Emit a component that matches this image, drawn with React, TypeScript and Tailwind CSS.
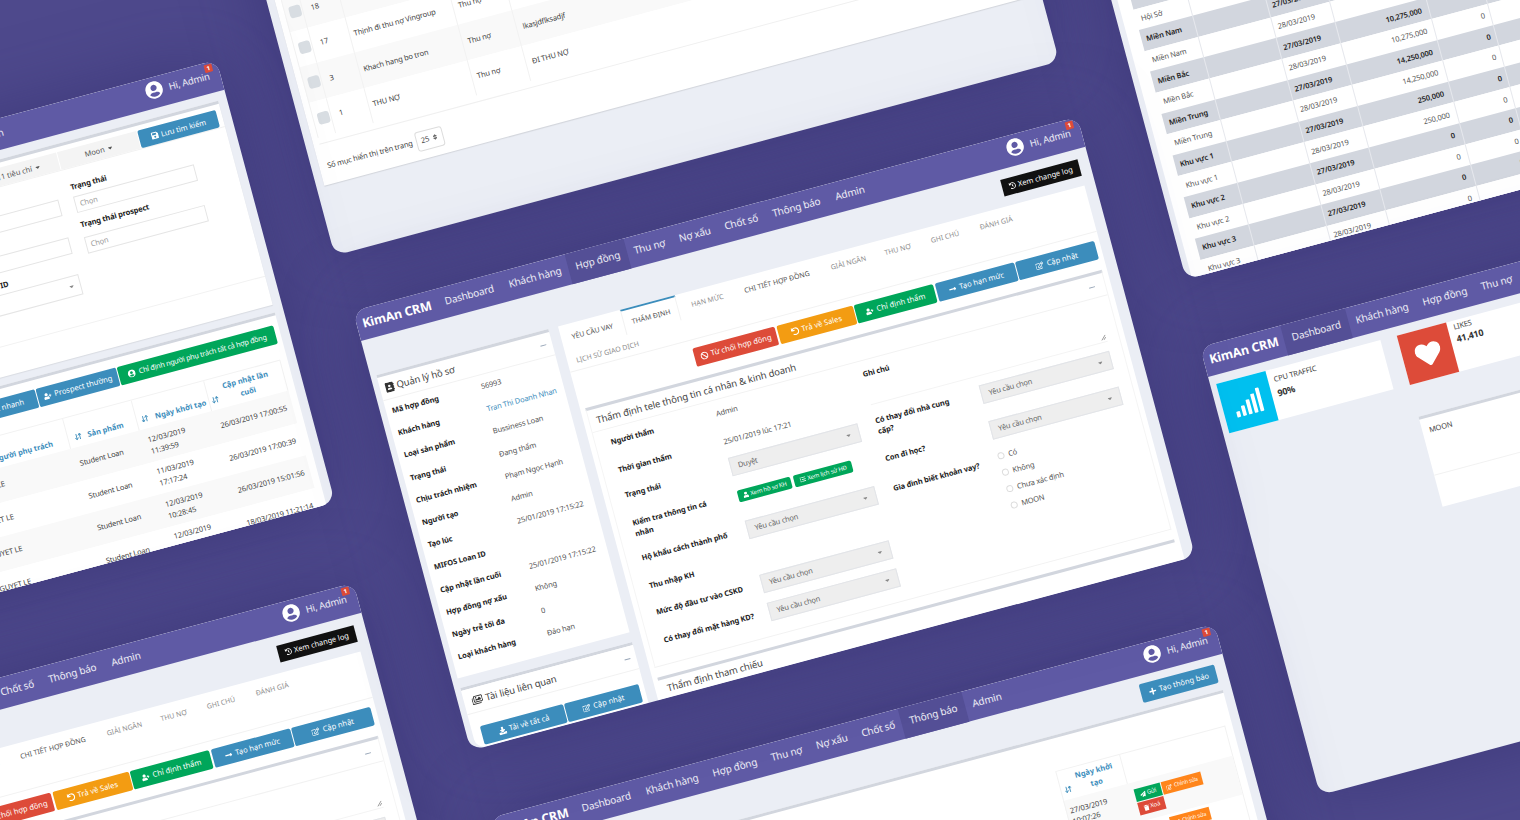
import type { ReactNode } from "react";
import {
  FaAddressBook,
  FaBan,
  FaCaretDown,
  FaDownload,
  FaHeart,
  FaHistory,
  FaList,
  FaLongArrowAltRight,
  FaPaperPlane,
  FaPlus,
  FaRegEdit,
  FaRegImages,
  FaSave,
  FaSignal,
  FaSort,
  FaTrash,
  FaUndo,
  FaUser,
  FaUserCircle,
  FaUserPlus,
} from "react-icons/fa";
import { ArrowDownUp } from "lucide-react";

const NAV = [
  { label: "Dashboard", w: "w-[67px]" },
  { label: "Khách hàng", w: "w-[69px]" },
  { label: "Hợp đồng", w: "w-[61px]" },
  { label: "Thu nợ", w: "w-[46px]" },
  { label: "Nợ xấu", w: "w-[48px]" },
  { label: "Chốt số", w: "w-[48px]" },
  { label: "Thông báo", w: "w-[66px]" },
  { label: "Admin", w: "w-[45px]" },
];

function Nav({ active }: { active?: string }) {
  return (
    <div className="relative flex h-[31px] shrink-0 bg-[#5f5aa5] tracking-normal text-white">
      <div className="flex w-[83px] items-center pb-[3px] pl-[6px] text-[12.5px] font-bold tracking-[-0.01em] whitespace-nowrap">
        KimAn CRM
      </div>
      {NAV.map((n) => (
        <div
          key={n.label}
          className={`flex items-center justify-center pb-[3px] text-[10px] tracking-[-0.015em] whitespace-nowrap text-white/90 ${n.w} ${
            active === n.label ? "bg-[#544f96]" : ""
          }`}
        >
          {n.label}
        </div>
      ))}
      <div className="ml-auto flex items-center gap-[6px] pr-[11px] pb-[5px] text-[9.5px] tracking-[-0.02em] whitespace-nowrap text-white/90">
        <FaUserCircle className="size-[18px] text-white" />
        Hi, Admin
      </div>
      <span className="absolute top-[2px] right-[6px] flex size-[8px] items-center justify-center rounded-[1px] bg-[#dd4b39] text-[6px] font-bold text-white">
        1
      </span>
    </div>
  );
}

function Win({ className, h = "h-[455px]", children }: { className: string; h?: string; children: ReactNode }) {
  return (
    <div
      className={`absolute flex w-[750px] origin-top-left rotate-[-15deg] flex-col overflow-hidden rounded-[13px] bg-[#ebeef5] text-[7.5px] leading-[11px] tracking-[-0.02em] text-[#555] shadow-[0_0_70px_rgba(52,47,112,0.6)] ${h} ${className}`}
    >
      {children}
    </div>
  );
}

function Btn({ color, w, icon, children }: { color: string; w: string; icon?: ReactNode; children: ReactNode }) {
  return (
    <div
      className={`flex h-[19px] items-center justify-center gap-[3px] rounded-[2px] text-[7.6px] tracking-normal whitespace-nowrap text-white ${color} ${w}`}
    >
      {icon}
      {children}
    </div>
  );
}

function Select({ w, label }: { w: string; label: string }) {
  return (
    <div className={`flex h-[19px] items-center justify-between border border-[#e2e4e8] bg-[#eeeeee] px-[7px] text-[#666] ${w}`}>
      {label}
      <FaCaretDown className="size-[7px] text-[#888]" />
    </div>
  );
}

function Minus() {
  return <span className="h-[1px] w-[6px] bg-[#98a6b8]" />;
}

function Bold({ children }: { children: ReactNode }) {
  return <div className="text-[7.5px] leading-[11px] font-bold tracking-[-0.015em] whitespace-nowrap text-[#222]">{children}</div>;
}

const PROFILE = [
  ["Mã hợp đồng", "56993"],
  ["Khách hàng", "Tran Thi Doanh Nhan"],
  ["Loại sản phẩm", "Bussiness Loan"],
  ["Trạng thái", "Đang thẩm"],
  ["Chịu trách nhiệm", "Phạm Ngọc Hạnh"],
  ["Người tạo", "Admin"],
  ["Tạo lúc", "25/01/2019 17:15:22"],
  ["MIFOS Loan ID", ""],
  ["Cập nhật lần cuối", "25/01/2019 17:15:22"],
  ["Hợp đồng nợ xấu", "Không"],
  ["Ngày trễ tối đa", "0"],
  ["Loại khách hàng", "Đáo hạn"],
];

const TABS = [
  { label: "YÊU CẦU VAY", w: "w-[64px]", tone: "text-[#555]" },
  { label: "THẨM ĐỊNH", w: "w-[57px] border-t-2 border-x border-x-[#f2f2f2] border-t-[#3c8dbc]", tone: "text-[#555]" },
  { label: "HẠN MỨC", w: "w-[60px]", tone: "text-[#8f8f8f]" },
  { label: "CHI TIẾT HỢP ĐỒNG", w: "w-[84px]", tone: "text-[#555]" },
  { label: "GIẢI NGÂN", w: "w-[64px]", tone: "text-[#8f8f8f]" },
  { label: "THU NỢ", w: "w-[38px]", tone: "text-[#8f8f8f]" },
  { label: "GHI CHÚ", w: "w-[60px]", tone: "text-[#8f8f8f]" },
  { label: "ĐÁNH GIÁ", w: "w-[46px]", tone: "text-[#8f8f8f]" },
];

const ic = "size-[8px] shrink-0";
const boxTitle = "text-[9.5px] tracking-[-0.01em] whitespace-nowrap text-[#444]";

function ContractWin({ className }: { className: string }) {
  return (
    <Win className={className}>
      <Nav active="Hợp đồng" />
      <div className="flex flex-1 flex-col pr-[11px] pl-[6px]">
        <div className="mt-[10px] flex justify-end">
          <div className="flex h-[17px] w-[80px] items-center justify-center gap-[2px] bg-[#111] text-[7.5px] tracking-normal whitespace-nowrap text-white">
            <FaHistory className="size-[7px]" />
            Xem change log
          </div>
        </div>
        <div className="mt-[10px] flex flex-1 gap-[10px]">
          {/* cột trái */}
          <div className="flex w-[178px] shrink-0 flex-col gap-[10px]">
            <div className="h-[314px] border-t-[3px] border-[#d2d6de] bg-white">
              <div className={`flex h-[24px] items-center justify-between border-b border-[#f2f2f2] pr-[6px] pl-[5px] ${boxTitle}`}>
                <span className="flex items-center gap-[2px]">
                  <FaAddressBook className="size-[10px] text-[#333]" />
                  Quản lý hồ sơ
                </span>
                <Minus />
              </div>
              {PROFILE.map(([k, v]) => (
                <div key={k} className="flex h-[23.2px] items-center pl-[6px]">
                  <div className="w-[92px]">
                    <Bold>{k}</Bold>
                  </div>
                  <span className={`whitespace-nowrap ${k === "Khách hàng" ? "text-[#3c8dbc]" : ""}`}>{v}</span>
                </div>
              ))}
            </div>
            <div className="flex-1 rounded-bl-[10px] border-t-[3px] border-[#d2d6de] bg-white">
              <div className={`flex h-[25px] items-center justify-between border-b border-[#f2f2f2] pr-[6px] pl-[8px] ${boxTitle}`}>
                <span className="flex items-center gap-[3px]">
                  <FaRegImages className="size-[11px] text-[#333]" />
                  Tài liệu liên quan
                </span>
                <Minus />
              </div>
              <div className="mt-[14px] ml-[9px] flex gap-px">
                <Btn color="bg-[#3c8dbc]" w="w-[86px]" icon={<FaDownload className={ic} />}>
                  Tải về tất cả
                </Btn>
                <Btn color="bg-[#3c8dbc]" w="w-[77px]" icon={<FaRegEdit className={ic} />}>
                  Cập nhật
                </Btn>
              </div>
            </div>
          </div>

          {/* cột phải */}
          <div className="flex-1 bg-white px-[5px]">
            <div className="-mx-[5px] h-[48px] border-b border-[#f2f2f2] tracking-normal">
              <div className="flex h-[26px]">
                {TABS.map((t) => (
                  <div key={t.label} className={`flex items-center justify-center text-[7px] whitespace-nowrap ${t.w} ${t.tone}`}>
                    {t.label}
                  </div>
                ))}
              </div>
              <div className="flex h-[22px] items-center pl-[9px] text-[7px] text-[#8f8f8f]">LỊCH SỬ GIAO DỊCH</div>
            </div>
            <div className="mt-[8px] flex justify-end gap-[1.5px]">
              <Btn color="bg-[#dd4b39]" w="w-[85px]" icon={<FaBan className={ic} />}>
                Từ chối hợp đồng
              </Btn>
              <Btn color="bg-[#f39c12]" w="w-[79px]" icon={<FaUndo className={ic} />}>
                Trả về Sales
              </Btn>
              <Btn color="bg-[#00a65a]" w="w-[82px]" icon={<FaUserPlus className={ic} />}>
                Chỉ định thẩm
              </Btn>
              <Btn color="bg-[#3c8dbc]" w="w-[82px]" icon={<FaLongArrowAltRight className={ic} />}>
                Tạo hạn mức
              </Btn>
              <Btn color="bg-[#3c8dbc]" w="w-[82px]" icon={<FaRegEdit className={ic} />}>
                Cập nhật
              </Btn>
            </div>
            <div className="mt-[11px] h-[269px] border-t-[3px] border-x border-b border-x-[#f5f5f5] border-b-[#f2f2f2] border-t-[#d2d6de]">
              <div className={`flex h-[23px] items-center justify-between border-b border-[#f2f2f2] pr-[10px] pl-[7px] ${boxTitle}`}>
                Thẩm định tele thông tin cá nhân &amp; kinh doanh
                <Minus />
              </div>
              <div className="flex pl-[15px]">
                <div className="w-[261px]">
                  <div className="flex h-[27px] items-center">
                    <div className="w-[109px]"><Bold>Người thẩm</Bold></div>
                    Admin
                  </div>
                  <div className="flex h-[31px] items-center">
                    <div className="w-[109px]"><Bold>Thời gian thẩm</Bold></div>
                    25/01/2019 lúc 17:21
                  </div>
                  <div className="flex h-[21px] items-center">
                    <div className="w-[109px]"><Bold>Trạng thái</Bold></div>
                    <Select w="w-[134px]" label="Duyệt" />
                  </div>
                  <div className="flex h-[39px]">
                    <div className="w-[109px] pt-[13px]">
                      <Bold>
                        Kiểm tra thông tin cá
                        <br />
                        nhân
                      </Bold>
                    </div>
                    <div className="flex gap-[3px] pt-[14px]">
                      <div className="flex h-[12px] w-[55px] items-center justify-center gap-[2px] rounded-[2px] bg-[#00a65a] text-[6px] whitespace-nowrap text-white">
                        <FaUser className="size-[6px]" />
                        Xem hồ sơ KH
                      </div>
                      <div className="flex h-[12px] w-[60px] items-center justify-center gap-[2px] rounded-[2px] bg-[#00a65a] text-[6px] whitespace-nowrap text-white">
                        <FaList className="size-[6px]" />
                        Xem lịch sử HĐ
                      </div>
                    </div>
                  </div>
                  <div className="flex h-[30px] items-center">
                    <div className="w-[109px]"><Bold>Hộ khẩu cách thành phố</Bold></div>
                    <Select w="w-[134px]" label="Yêu cầu chọn" />
                  </div>
                  <div className="flex h-[28px] items-center">
                    <div className="w-[109px]"><Bold>Thu nhập KH</Bold></div>
                  </div>
                  <div className="flex h-[27px] items-center">
                    <div className="w-[109px]"><Bold>Mức độ đầu tư vào CSKD</Bold></div>
                    <Select w="w-[134px]" label="Yêu cầu chọn" />
                  </div>
                  <div className="flex h-[30px] items-center">
                    <div className="w-[109px]"><Bold>Có thay đổi mặt hàng KD?</Bold></div>
                    <Select w="w-[134px]" label="Yêu cầu chọn" />
                  </div>
                </div>
                <div className="flex-1 pr-[12px]">
                  <div className="flex h-[45px] border-b border-[#f4f4f4]">
                    <div className="w-[109px] pt-[8px]"><Bold>Ghi chú</Bold></div>
                    <div className="flex flex-1 items-end justify-end pb-[1px]">
                      <svg viewBox="0 0 8 8" className="size-[6px] text-[#888]">
                        <path d="M1 7 7 1M4 7l3-3" stroke="currentColor" fill="none" />
                      </svg>
                    </div>
                  </div>
                  <div className="flex h-[46px]">
                    <div className="w-[109px] pt-[11px]">
                      <Bold>
                        Có thay đổi nhà cung
                        <br />
                        cấp?
                      </Bold>
                    </div>
                    <div className="pt-[9px]"><Select w="w-[135px]" label="Yêu cầu chọn" /></div>
                  </div>
                  <div className="flex h-[28px]">
                    <div className="w-[109px] pt-[4px]"><Bold>Con đi học?</Bold></div>
                    <Select w="w-[135px]" label="Yêu cầu chọn" />
                  </div>
                  <div className="flex">
                    <div className="w-[109px] pt-[7px]"><Bold>Gia đình biết khoản vay?</Bold></div>
                    <div>
                      {["Có", "Không", "Chưa xác định", "MOON"].map((r) => (
                        <div key={r} className="flex h-[17px] items-center gap-[4px]">
                          <span className="size-[7px] rounded-full border border-[#ddd] bg-white" />
                          {r}
                        </div>
                      ))}
                    </div>
                  </div>
                </div>
              </div>
            </div>
            <div className={`mt-[10px] border-t-[3px] border-[#d2d6de] pt-[4px] pl-[7px] ${boxTitle}`}>Thẩm định tham chiếu</div>
          </div>
        </div>
      </div>
    </Win>
  );
}

function SortHead({ children, className }: { children: ReactNode; className: string }) {
  return (
    <div className={`flex h-full items-end gap-[6px] border-r border-[#f2f2f2] pb-[4px] text-[7.5px] leading-[12px] font-bold tracking-normal text-[#3c8dbc] ${className}`}>
      <ArrowDownUp className="mb-[2px] size-[8px] shrink-0" strokeWidth={2.5} />
      {children}
    </div>
  );
}

const LEADS = [
  ["12/03/2019", "11:39:59", "26/03/2019 17:00:55"],
  ["11/03/2019", "17:17:24", "26/03/2019 17:00:39"],
  ["12/03/2019", "10:28:45", "26/03/2019 15:01:56"],
  ["12/03/2019", "11:39:59", "18/03/2019 11:21:14"],
];

function FilterWin({ className }: { className: string }) {
  const label = "h-[12px] text-[7.6px] leading-[12px] font-bold whitespace-nowrap text-[#222]";
  const input = "flex h-[17px] w-[125px] items-center border border-[#e5e5e5] px-[4px] text-[#999]";
  const tool = "flex h-[18px] items-center justify-center gap-[2px] tracking-normal";
  return (
    <Win className={className} h="h-[458px]">
      <Nav />
      <div className="flex flex-1 flex-col pr-[9px] pl-[6px]">
        <div className="mt-[9px] flex h-[211px] flex-col border-t-[3px] border-[#d2d6de] bg-white shadow-[0_1px_1px_rgba(0,0,0,0.08)]">
          <div className="flex h-[24px] items-end justify-end gap-px border-b border-[#f2f2f2] pr-[5px]">
            <div className={`${tool} w-[82px] bg-[#f4f4f4] text-[#555]`}>
              11 tiêu chí <FaCaretDown className="size-[7px]" />
            </div>
            <div className={`${tool} w-[82px] bg-[#f4f4f4] text-[#555]`}>
              Moon <FaCaretDown className="size-[7px]" />
            </div>
            <div className={`${tool} w-[81px] rounded-[2px] bg-[#3c8dbc] whitespace-nowrap text-white`}>
              <FaSave className="size-[8px]" /> Lưu tìm kiếm
            </div>
          </div>
          <div className="flex flex-1 justify-end gap-[15px] pr-[40px]">
            <div className="pt-[11px]">
              <div className={label} />
              <div className={`${input} mt-[4px]`} />
              <div className={`${label} mt-[5px]`} />
              <div className={`${input} mt-[5px]`} />
              <div className={`${label} mt-[6px] w-[55px] text-right`}>MIFOS ID</div>
              <div className="mt-[3px] flex h-[21px] w-[125px] items-center justify-end border border-[#e5e5e5] px-[5px]">
                <FaCaretDown className="size-[7px] text-[#888]" />
              </div>
            </div>
            <div className="pt-[12px]">
              <div className={label}>Trạng thái</div>
              <div className={`${input} mt-[4px]`}>Chọn</div>
              <div className={`${label} mt-[6px]`}>Trạng thái prospect</div>
              <div className={`${input} mt-[7px]`}>Chọn</div>
            </div>
          </div>
          <div className="h-[30px] border-t border-[#f2f2f2]" />
        </div>
        <div className="mt-[8px] flex-1 border-t-[3px] border-[#d2d6de] bg-white">
          <div className="mt-[9px] flex justify-end gap-px pr-[5px]">
            <Btn color="bg-[#3c8dbc]" w="w-[83px]">Prospect nhanh</Btn>
            <Btn color="bg-[#3c8dbc]" w="w-[83px]" icon={<FaUserPlus className={ic} />}>Prospect thường</Btn>
            <Btn color="bg-[#00a65a]" w="w-[162px]" icon={<FaUserCircle className={ic} />}>
              <span className="text-[7.2px] tracking-[-0.025em]">Chỉ định người phụ trách tất cả hợp đồng</span>
            </Btn>
          </div>
          <div className="mt-[16px] mr-[7px] ml-auto w-[342px] border-t border-l border-[#f2f2f2]">
            <div className="flex h-[31px]">
              <SortHead className="w-[116px] justify-end pr-[15px]">Người phụ trách</SortHead>
              <SortHead className="w-[72px] pl-[6px]">Sản phẩm</SortHead>
              <SortHead className="w-[75px] pl-[4px]">Ngày khởi tạo</SortHead>
              <SortHead className="w-[79px] pl-[2px] text-center">
                Cập nhật lần
                <br />
                cuối
              </SortHead>
            </div>
            {LEADS.map((r, i) => (
              <div key={i} className={`flex h-[33.5px] items-center text-[#444] ${i % 2 === 0 ? "bg-[#f9f9f9]" : "bg-white"}`}>
                <div className="w-[116px] pl-[5px]">NGUYET LE</div>
                <div className="w-[72px] pl-[5px]">Student Loan</div>
                <div className="w-[75px] pl-[5px] leading-[12px]">
                  {r[0]}
                  <br />
                  {r[1]}
                </div>
                <div className="w-[79px] pl-[4px] whitespace-nowrap">{r[2]}</div>
              </div>
            ))}
          </div>
        </div>
      </div>
    </Win>
  );
}

const DEBTS = [
  ["18", "", "Thu nợ", ""],
  ["17", "Thịnh đi thu nợ Vingroup", "Thu nợ", ""],
  ["3", "Khach hang bo tron", "Thu nợ", "lkasjdflksadjf"],
  ["1", "THU NỢ", "Thu nợ", "ĐI THU NỢ"],
];

function DebtListWin({ className }: { className: string }) {
  return (
    <Win className={className}>
      <Nav active="Thu nợ" />
      <div className="flex flex-1 flex-col justify-end pr-[8px] pb-[70px] pl-[8px]">
        <div className="rounded-t-[2px] bg-white pt-[8px] shadow-[0_1px_1px_rgba(0,0,0,0.1)]">
          <div className="mx-[6px] border-b border-[#f0f0f0] pb-[6px]">
            {DEBTS.map((r, i) => (
              <div key={r[0]} className={`flex h-[36.5px] items-center text-[#444] ${i % 2 === 0 ? "bg-[#f9f9f9]" : "bg-white"}`}>
                <div className="flex h-full w-[19px] items-center justify-center border-x border-[#f2f2f2] pl-[2px]">
                  <span className="size-[12px] rounded-[3px] bg-[#d8dde2]" />
                </div>
                <div className="flex h-full w-[39px] items-center border-r border-[#f2f2f2] pl-[8px]">{r[0]}</div>
                <div className="flex h-full w-[107px] items-center border-r border-[#f2f2f2] pl-[4px] whitespace-nowrap">{r[1]}</div>
                <div className="flex h-full w-[56px] items-center border-r border-[#f2f2f2] pl-[5px]">{r[2]}</div>
                <div className="pl-[6px]">{r[3]}</div>
              </div>
            ))}
          </div>
          <div className="flex h-[41px] items-center gap-[4px] pt-[4px] pl-[8px] whitespace-nowrap text-[#444]">
            <span className="w-[88px]">Số mục hiển thị trên trang</span>
            <div className="flex h-[20px] w-[28px] items-center justify-between rounded-[3px] border border-[#ddd] px-[4px]">
              25
              <FaSort className="size-[7px] text-[#666]" />
            </div>
          </div>
        </div>
      </div>
    </Win>
  );
}

const REGIONS = [
  ["Hội Sở", "27/03/2019", "-1,000,000", ""],
  ["Hội Sở", "28/03/2019", "-1,000,000", "0"],
  ["Miền Nam", "27/03/2019", "-1,000,000", "0"],
  ["Miền Nam", "28/03/2019", "-1,000,000", "0"],
  ["Miền Bắc", "27/03/2019", "10,275,000", "0"],
  ["Miền Bắc", "28/03/2019", "10,275,000", "0"],
  ["Miền Trung", "27/03/2019", "14,250,000", "0"],
  ["Miền Trung", "28/03/2019", "14,250,000", "0"],
  ["Khu vực 1", "27/03/2019", "250,000", "0"],
  ["Khu vực 1", "28/03/2019", "250,000", "0"],
  ["Khu vực 2", "27/03/2019", "0", "0"],
  ["Khu vực 2", "28/03/2019", "0", "0"],
  ["Khu vực 3", "27/03/2019", "0", "0"],
  ["Khu vực 3", "28/03/2019", "0", "0"],
];

function ReportWin({ className }: { className: string }) {
  return (
    <Win className={className} h="h-[460px]">
      <Nav active="Chốt số" />
      <div className="flex-1 pt-[133px] pl-[6px]">
        <div className="h-[310px] bg-white pl-[13px]">
          {REGIONS.map((r, i) => (
            <div
              key={i}
              className={`flex h-[21.6px] items-center ${i % 2 === 0 ? "bg-[#d2d6de] font-semibold text-[#222]" : "bg-white text-[#555]"}`}
            >
              <div className="flex h-full w-[56px] items-center border-r border-[#e6e8ed] pl-[5px] whitespace-nowrap">{r[0]}</div>
              <div className="h-full w-[75px] border-r border-[#e6e8ed]" />
              <div className="flex h-full w-[61px] items-center border-r border-[#e6e8ed] pl-[4px]">{r[1]}</div>
              <div className="flex h-full w-[94px] items-center justify-end border-r border-[#e6e8ed] pr-[7px]">{r[2]}</div>
              <div className="flex h-full w-[58px] items-center justify-end border-r border-[#e6e8ed] pr-[5px]">{r[3]}</div>
            </div>
          ))}
        </div>
      </div>
    </Win>
  );
}

function DashboardWin({ className }: { className: string }) {
  return (
    <Win className={className} h="h-[464px]">
      <Nav active="Dashboard" />
      <div className="flex flex-1 gap-[17px] pt-[9px] pr-[10px] pl-[6px]">
        <div className="flex h-[51px] w-[170px] bg-white">
          <div className="flex w-[51px] items-center justify-center bg-[#00c0ef]">
            <FaSignal className="size-[30px] text-white" />
          </div>
          <div className="pt-[5px] pl-[6px] text-[#444]">
            CPU TRAFFIC
            <div className="mt-[3px] text-[9px] font-bold text-[#333]">90%</div>
          </div>
        </div>
        <div className="flex-1">
          <div className="flex h-[51px] w-[170px] bg-white">
            <div className="flex w-[51px] items-center justify-center bg-[#dd4b39]">
              <FaHeart className="size-[26px] text-white" />
            </div>
            <div className="pt-[1px] pl-[6px] text-[#444]">
              LIKES
              <div className="mt-[1px] text-[9px] font-bold text-[#333]">41,410</div>
            </div>
          </div>
          <div className="mt-[33px] h-[93px] border-t-[3px] border-[#d2d6de] bg-white">
            <div className="h-[58px] border-b border-[#f2f2f2] pt-[7px] pl-[7px] text-[#444]">MOON</div>
          </div>
        </div>
      </div>
    </Win>
  );
}

function NotifyWin({ className }: { className: string }) {
  return (
    <Win className={className}>
      <Nav active="Thông báo" />
      <div className="flex flex-1 flex-col pr-[9px] pl-[6px]">
        <div className="mt-[8px] flex justify-end pr-[2px]">
          <Btn color="bg-[#3c8dbc]" w="w-[78px]" icon={<FaPlus className={ic} />}>
            Tạo thông báo
          </Btn>
        </div>
        <div className="mt-[8px] flex-1 border-t-[3px] border-[#d2d6de] bg-white pt-[32px] pr-[7px]">
          <div className="ml-auto w-[176px] border-t border-r border-[#f2f2f2]">
            <div className="flex h-[30px]">
              <SortHead className="w-[67px] border-l pl-[3px] text-center">
                Ngày khởi
                <br />
                tạo
              </SortHead>
              <div className="flex-1" />
            </div>
            <div className="flex h-[40px] bg-[#f9f9f9]">
              <div className="w-[67px] border-l border-[#f2f2f2] pt-[6px] pl-[3px] text-[#444]">
                27/03/2019
                <br />
                10:07:26
              </div>
              <div className="w-[80px] pt-[7px] pl-[4px]">
                <div className="flex gap-px">
                  <div className="flex h-[13px] w-[27px] items-center justify-center gap-[1px] bg-[#00a65a] text-[6px] text-white">
                    <FaPaperPlane className="size-[6px]" />
                    Gửi
                  </div>
                  <div className="flex h-[13px] w-[41px] items-center justify-center gap-[2px] bg-[#ff851b] text-[5.5px] whitespace-nowrap text-white">
                    <FaRegEdit className="size-[6px] shrink-0" />
                    Chỉnh sửa
                  </div>
                </div>
                <div className="mt-px flex h-[13px] w-[27px] items-center justify-center gap-[1px] bg-[#dd4b39] text-[6px] text-white">
                  <FaTrash className="size-[6px]" />
                  Xoá
                </div>
              </div>
            </div>
            <div className="flex h-[40px]">
              <div className="w-[67px] border-l border-[#f2f2f2]" />
              <div className="pt-[3px] pl-[31px]">
                <div className="flex h-[13px] w-[41px] items-center justify-center gap-[2px] bg-[#ff851b] text-[5.5px] whitespace-nowrap text-white">
                  <FaRegEdit className="size-[6px] shrink-0" />
                  Chỉnh sửa
                </div>
              </div>
            </div>
          </div>
        </div>
      </div>
    </Win>
  );
}

export default function App() {
  return (
    <div className="relative h-[820px] w-[1520px] overflow-hidden bg-[#4e498c] font-['Noto_Sans',sans-serif]">
      <DebtListWin className="top-[-184px] left-[217px]" />
      <FilterWin className="top-[254px] left-[-508px]" />
      <ReportWin className="top-[-165px] left-[1067px]" />
      <DashboardWin className="top-[347px] left-[1200px]" />
      <ContractWin className="top-[777px] left-[-371px]" />
      <NotifyWin className="top-[818px] left-[490px]" />
      <ContractWin className="top-[311px] left-[353px]" />
    </div>
  );
}
